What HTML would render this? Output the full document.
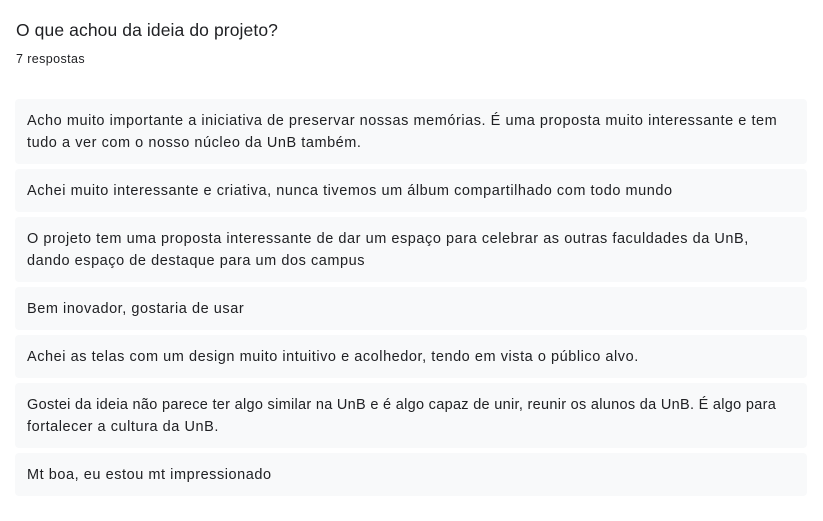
<!DOCTYPE html>
<html><head><meta charset="utf-8"><style>
body{margin:0;background:#fff;width:823px;height:521px;overflow:hidden;font-family:"Liberation Sans",Arial,sans-serif;color:#202124}
h1{position:absolute;left:16px;top:18px;margin:0;font-size:17.5px;font-weight:400;letter-spacing:0.1px;line-height:24px}
.n{position:absolute;left:16px;top:51px;font-size:12.5px;letter-spacing:0.4px;line-height:16px}
.list{position:absolute;left:15px;top:99px;width:792px}
.b{background:#f8f9fa;border-radius:4px;margin-bottom:5px;padding:11px 12px 10px;font-size:14.5px;line-height:22px;letter-spacing:0.55px;white-space:nowrap}
</style></head><body>
<h1>O que achou da ideia do projeto?</h1>
<div class="n">7 respostas</div>
<div class="list">
<div class="b">Acho muito importante a iniciativa de preservar nossas memórias. É uma proposta muito interessante e tem<br>tudo a ver com o nosso núcleo da UnB também.</div>
<div class="b">Achei muito interessante e criativa, nunca tivemos um álbum compartilhado com todo mundo</div>
<div class="b">O projeto tem uma proposta interessante de dar um espaço para celebrar as outras faculdades da UnB,<br>dando espaço de destaque para um dos campus</div>
<div class="b">Bem inovador, gostaria de usar</div>
<div class="b">Achei as telas com um design muito intuitivo e acolhedor, tendo em vista o público alvo.</div>
<div class="b"><span style="letter-spacing:0.3px">Gostei da ideia não parece ter algo similar na UnB e é algo capaz de unir, reunir os alunos da UnB. É algo para</span><br>fortalecer a cultura da UnB.</div>
<div class="b">Mt boa, eu estou mt impressionado</div>
</div>
</body></html>
